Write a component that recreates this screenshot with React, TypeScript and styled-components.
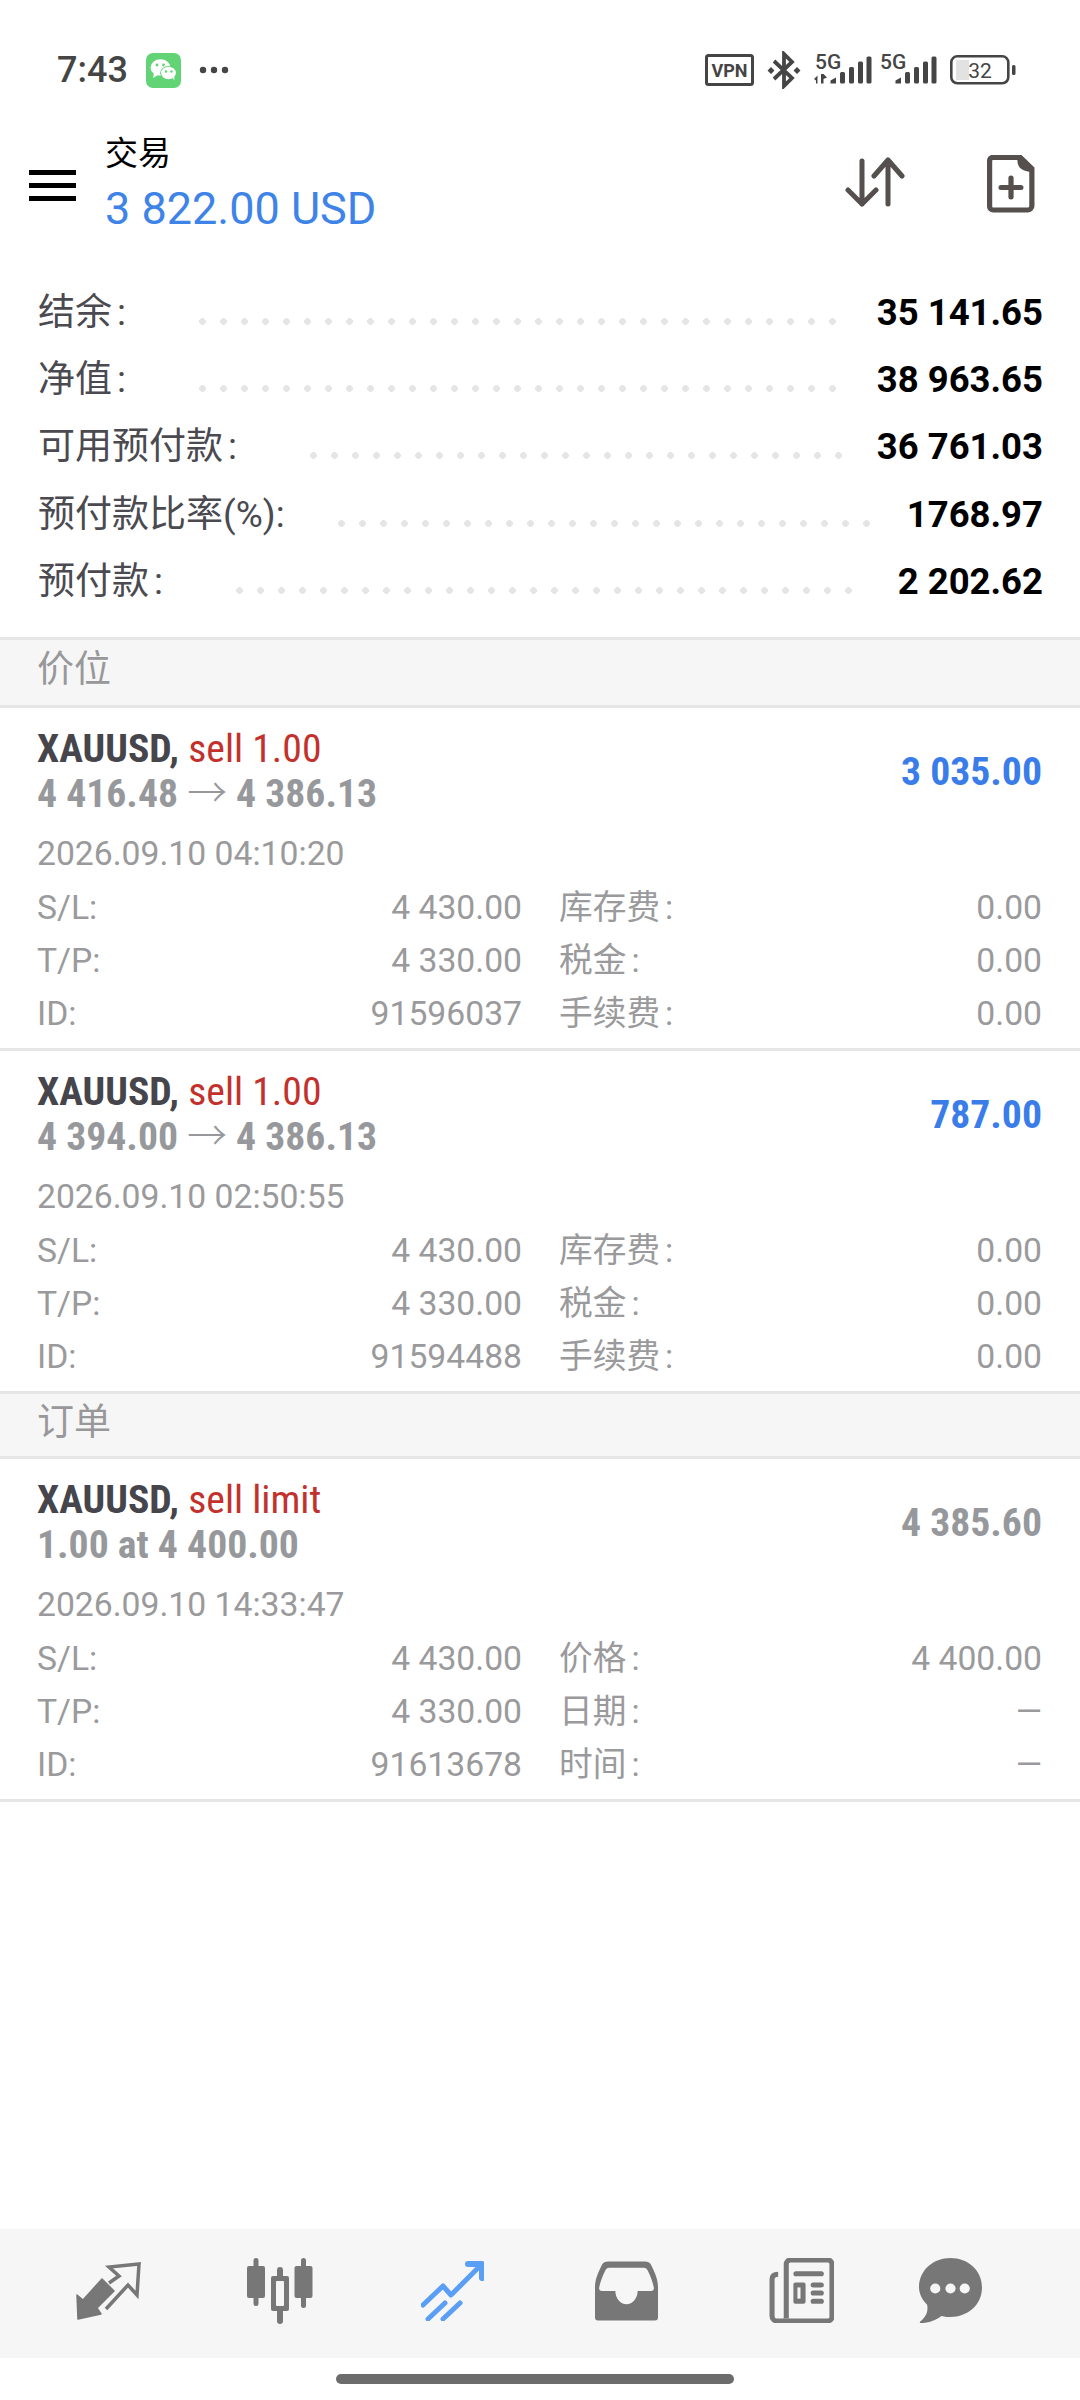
import React from "react";
import styled, { createGlobalStyle } from "styled-components";

const Global = createGlobalStyle`
  html, body { margin: 0; padding: 0; background: #fff; }
  body { font-family: Roboto, "Noto Sans CJK SC", sans-serif; }
`;

const Page = styled.div`
  width: 1080px;
  height: 2400px;
  display: flex;
  flex-direction: column;
  background: #fff;
  overflow: hidden;
`;

const StatusBar = styled.div`
  height: 140px;
  flex: none;
  display: flex;
  align-items: flex-start;
  padding: 51px 64px 0 57px;
  box-sizing: border-box;
`;
const Time = styled.span`
  font-size: 36px;
  line-height: 38px;
  font-weight: 500;
  color: #454545;
`;
const StatusLeft = styled.div`
  display: flex;
  align-items: center;
  gap: 18px;
`;
const StatusRight = styled.div`
  margin-left: auto;
  display: flex;
  align-items: center;
  gap: 13px;
`;
const SignalPair = styled.div`
  display: flex;
  align-items: center;
  gap: 7px;
`;

const Header = styled.div`
  height: 115px;
  flex: none;
  display: flex;
  align-items: flex-start;
  padding: 0 45px 0 29px;
  box-sizing: border-box;
`;
const Burger = styled.div`
  width: 47px;
  margin-top: 30px;
  display: flex;
  flex-direction: column;
  gap: 8px;
`;
const BurgerBar = styled.span`
  height: 5px;
  background: #000;
`;
const TitleBlock = styled.div`
  margin-left: 29px;
  display: flex;
  flex-direction: column;
`;
const PageTitle = styled.div`
  font-size: 33px;
  line-height: 40px;
  color: #000;
  font-weight: 400;
  margin-top: -6px;
`;
const Balance = styled.div`
  font-size: 45px;
  line-height: 52px;
  color: #3e84e8;
  margin-top: 9px;
`;
const HeaderIcons = styled.div`
  margin-left: auto;
  margin-top: 15px;
  display: flex;
  align-items: flex-start;
  gap: 82px;
`;
const SortSlot = styled.div`
  display: flex;
  margin-top: 2px;
`;

const Summary = styled.div`
  flex: none;
  height: 385px;
  padding: 24px 37px 0 38px;
  box-sizing: border-box;
  border-bottom: 3px solid #e6e6e6;
`;
const SummaryRow = styled.div`
  height: 67.2px;
  display: flex;
  align-items: center;
`;
const SummaryLabel = styled.span`
  font-size: 37px;
  line-height: 44px;
  margin-top: 1px;
  color: #4a4a50;
  font-weight: 400;
`;
const Colon = styled.span<{ $tight?: boolean }>`
  margin-left: ${(p) => (p.$tight ? 0 : 5)}px;
`;
const Leader = styled.span<{ $gap: number }>`
  flex: 1;
  height: 7px;
  margin: 18px 32px 0 ${(p) => p.$gap}px;
  background-image: radial-gradient(circle at 3.5px 3.5px, #e5e5e5 3.1px, transparent 3.6px);
  background-size: 21px 7px;
  background-repeat: repeat-x;
`;
const SummaryValue = styled.span`
  font-size: 36.5px;
  font-weight: 700;
  color: #000;
`;

const SectionBar = styled.div<{ $height: number; $pad: number }>`
  flex: none;
  height: ${(p) => p.$height}px;
  padding: 0 0 ${(p) => p.$pad}px 37px;
  box-sizing: border-box;
  display: flex;
  align-items: center;
  background: #f6f6f6;
  border-bottom: 3px solid #e6e6e6;
  font-size: 37px;
  font-weight: 400;
  color: #98989a;
`;

const Card = styled.div`
  flex: none;
  height: 343px;
  box-sizing: border-box;
  padding: 18px 38px 0 37px;
  border-bottom: 3px solid #e6e6e6;
`;
const CardTop = styled.div`
  display: flex;
  align-items: center;
  height: 90px;
`;
const CardTitles = styled.div`
  flex: 1;
  display: flex;
  flex-direction: column;
`;
const Condensed = styled.span`
  display: block;
  font-size: 39.7px;
  line-height: 45px;
  font-weight: 700;
  font-stretch: 75%;
  white-space: nowrap;
`;
const Symbol = styled(Condensed)`
  color: #45454b;
`;
const Side = styled.span`
  color: #c2312c;
  font-weight: 400;
`;
const Prices = styled(Condensed)`
  color: #96989c;
`;
const Arrow = styled.span`
  font-weight: 300;
`;
const Profit = styled(Condensed)<{ $color: string }>`
  color: ${(p) => p.$color};
`;
const DateLine = styled.div`
  font-size: 33.7px;
  line-height: 53px;
  margin-top: 11px;
  color: #9a9a9c;
`;
const Details = styled.div`
  display: grid;
  grid-template-columns: 485px 483px;
  column-gap: 37px;
  margin-top: 1px;
`;
const DetailRow = styled.div`
  display: flex;
  justify-content: space-between;
  font-size: 33.7px;
  line-height: 53px;
  height: 53px;
  font-weight: 400;
  color: #9a9a9c;
`;

const Spacer = styled.div`
  flex: 1;
`;
const Nav = styled.div`
  flex: none;
  height: 129px;
  background: #f6f6f6;
  display: flex;
  align-items: center;
  padding: 0 98px 6px 76px;
  box-sizing: border-box;
`;
const NavGroup = styled.div`
  display: grid;
  grid-template-columns: 171px 174px 174px 174px 65px;
  align-items: center;
`;
const NavEnd = styled.div`
  margin-left: auto;
  display: flex;
`;
const BottomArea = styled.div`
  flex: none;
  height: 42px;
  display: flex;
  justify-content: center;
  padding: 16px 10px 0 0;
  box-sizing: border-box;
`;
const HomeBar = styled.div`
  width: 398px;
  height: 10px;
  border-radius: 5px;
  background: #6c6c6c;
`;

const WeChat = () => (
  <svg width="35" height="35" viewBox="0 0 35 35">
    <rect width="35" height="35" rx="7" fill="#62d475" />
    <ellipse cx="14.500" cy="14.500" rx="10" ry="8.200" fill="#fff" />
    <path d="M8 20l-1 5 5-3z" fill="#fff" />
    <ellipse cx="22.500" cy="20" rx="8.400" ry="7" fill="#62d475" />
    <ellipse cx="22.500" cy="20" rx="7.400" ry="6.200" fill="#fff" />
    <path d="M26 24l2.500 3.500-.5-5z" fill="#fff" />
    <circle cx="11" cy="12" r="1.400" fill="#62d475" />
    <circle cx="17.500" cy="12" r="1.400" fill="#62d475" />
    <circle cx="20" cy="18.500" r="1.200" fill="#62d475" />
    <circle cx="25.500" cy="18.500" r="1.200" fill="#62d475" />
  </svg>
);
const More = () => (
  <svg width="30" height="8" viewBox="0 0 30 8">
    <circle cx="4" cy="4" r="3.200" fill="#454545" />
    <circle cx="15" cy="4" r="3.200" fill="#454545" />
    <circle cx="26" cy="4" r="3.200" fill="#454545" />
  </svg>
);
const Vpn = () => (
  <svg width="49" height="32" viewBox="0 0 49 32">
    <rect x="1.500" y="1.500" width="46" height="29" rx="2" fill="none" stroke="#454545" strokeWidth="3" />
    <text x="24.500" y="22.500" textAnchor="middle" fontFamily="Roboto" fontWeight="700" fontSize="18" fill="#454545">VPN</text>
  </svg>
);
const Bluetooth = () => (
  <svg width="34" height="38" viewBox="0 0 34 38">
    <path d="M7 10l18 17-8 8V3l8 8L7 28" fill="none" stroke="#454545" strokeWidth="3.800" />
    <path d="M4 16l3.500 3.500L4 23 .5 19.500zM30 16l3.500 3.500L30 23l-3.500-3.500z" fill="#454545" />
  </svg>
);
const Signal = ({ arrows }: { arrows?: boolean }) => (
  <svg width="58" height="34" viewBox="0 0 58 34" overflow="visible">
    <text x="1" y="16" fontFamily="Roboto" fontWeight="500" fontSize="21" fill="#454545">5G</text>
    {arrows && (
      <path d="M0 26l3.500-3.500v8H2v-3zM7 21h2.500v9.500H7zM9.500 21l3.500 3.500-3.500 1.500z" fill="#454545" />
    )}
    <path d="M16.500 30.500v-3l5.500-3v6z" fill="#454545" />
    <rect x="26" y="19" width="5" height="11.500" rx="1.500" fill="#454545" />
    <rect x="35" y="14" width="5" height="16.500" rx="1.500" fill="#454545" />
    <rect x="44" y="8.500" width="5" height="22" rx="1.500" fill="#454545" />
    <rect x="52.500" y="3.500" width="5" height="27" rx="1.500" fill="#454545" />
  </svg>
);
const Battery = () => (
  <svg width="66" height="30" viewBox="0 0 66 30">
    <rect x="1.300" y="1.300" width="57" height="27" rx="6" fill="none" stroke="#454545" strokeWidth="2.600" />
    <path d="M6 5h13v20H6z" fill="#e2e2e2" />
    <rect x="62" y="10" width="3.500" height="10" rx="1.500" fill="#454545" />
    <text x="30" y="23" textAnchor="middle" fontFamily="Roboto" fontSize="21" fill="#454545">32</text>
  </svg>
);
const SortIcon = () => (
  <svg width="60" height="50" viewBox="0 0 60 50" fill="none" stroke="#55504e" strokeWidth="5" strokeLinecap="round" strokeLinejoin="round">
    <path d="M17 4v43M3 33l14 14 14-14" />
    <path d="M43 47V3M29 19L43 3l14 16" />
  </svg>
);
const NewFile = () => (
  <svg width="48" height="58" viewBox="0 0 46 58" fill="none" preserveAspectRatio="none">
    <path d="M5 2.500h27l11 11V51a4 4 0 0 1-4 4H6a3.500 3.500 0 0 1-3.500-3.500V6A3.500 3.500 0 0 1 5 2.500z" stroke="#55504e" strokeWidth="5" />
    <path d="M29 3c0 8 2 13 14 14V11L34 2z" fill="#55504e" />
    <path d="M23 23v19M13.500 32.500h19" stroke="#55504e" strokeWidth="5" strokeLinecap="round" />
  </svg>
);

const NavTrade = () => (
  <svg width="65" height="58" viewBox="0 0 65 58">
    <path d="M26 17L38 29 21 46l4 6-23 5-1-24 6 5z" fill="#777" stroke="#777" strokeWidth="1.500" strokeLinejoin="round" />
    <path d="M33 21l10-7-10-9 30-3-2 31-9-10-22 24" fill="none" stroke="#777" strokeWidth="3.500" />
  </svg>
);
const NavChart = () => (
  <svg width="66" height="66" viewBox="0 0 66 66" fill="#777">
    <rect x="6.500" y="0" width="5" height="48" rx="2.500" />
    <rect x="0" y="8" width="18" height="32" rx="2" />
    <rect x="30" y="9" width="6" height="57" rx="3" />
    <rect x="24" y="18" width="18" height="35" rx="2" />
    <rect x="29" y="23" width="8" height="25" rx="1" fill="#f6f6f6" />
    <rect x="54" y="0" width="5" height="50" rx="2.500" />
    <rect x="47.500" y="8" width="18" height="32" rx="2" />
  </svg>
);
const NavPositions = () => (
  <svg width="63" height="60" viewBox="0 0 63 60" fill="none" stroke="#5a9ef5" strokeWidth="5" strokeLinecap="round" strokeLinejoin="round">
    <path d="M2 44l20-19 8 9L60 4" />
    <path d="M47 3h14v14" strokeWidth="6" />
    <path d="M7 58l17-16M22 58l17-16" />
  </svg>
);
const NavInbox = () => (
  <svg width="63" height="60" viewBox="0 0 62 58" fill="#777">
    <path fillRule="evenodd" d="M13 0h36c3 0 5 1 6 3 4 8 7 15 7 22v30c0 2-1 3-3 3H3c-2 0-3-1-3-3V25C0 18 3 11 7 3c1-2 3-3 6-3zM14 6c-2 0-3 1-4 3-3 6-5 12-6 17 0 2 1 3 3 3h13c0 7 5 13 11 13s11-6 11-13h13c2 0 3-1 3-3-1-5-3-11-6-17-1-2-2-3-4-3z" />
  </svg>
);
const NavNews = () => (
  <svg width="65" height="65" viewBox="0 0 64 64" fill="none">
    <path d="M14 62h44a4 4 0 0 0 4-4V6a4 4 0 0 0-4-4H21a4 4 0 0 0-4 4v53" stroke="#777" strokeWidth="5" />
    <path d="M9 16c-4 0-6 2-6 5v36c0 3 2 5 5 5h12" stroke="#777" strokeWidth="5" />
    <rect x="24" y="13" width="30" height="5" rx="2.500" fill="#777" />
    <rect x="24" y="24" width="12" height="21" rx="2" fill="#777" />
    <rect x="28" y="29" width="3" height="11" fill="#f6f6f6" />
    <rect x="41" y="24" width="13" height="5" rx="2.500" fill="#777" />
    <rect x="41" y="32" width="13" height="5" rx="2.500" fill="#777" />
    <rect x="41" y="40" width="13" height="5" rx="2.500" fill="#777" />
  </svg>
);
const NavChat = () => (
  <svg width="63" height="65" viewBox="0 0 62 64">
    <path d="M31 0c17 0 31 12 31 29S48 58 31 58c-3 0-5 0-9-1-5 4-12 7-21 7-1-1 1-2 2-3 5-5 6-10 5-15C3 41 0 35 0 29 0 12 14 0 31 0z" fill="#777" />
    <circle cx="16" cy="30" r="5" fill="#f6f6f6" />
    <circle cx="31" cy="30" r="5" fill="#f6f6f6" />
    <circle cx="45" cy="30" r="5" fill="#f6f6f6" />
  </svg>
);

const summary = [
  { label: "结余", value: "35 141.65", gap: 73, tight: false },
  { label: "净值", value: "38 963.65", gap: 73, tight: false },
  { label: "可用预付款", value: "36 761.03", gap: 73, tight: false },
  { label: "预付款比率(%)", value: "1768.97", gap: 53, tight: true },
  { label: "预付款", value: "2 202.62", gap: 73, tight: false },
];

type Trade = {
  side: string;
  line2: React.ReactNode;
  result: string;
  resultColor: string;
  date: string;
  id: string;
  right: [string, string][];
};
const positionRight: [string, string][] = [
  ["库存费", "0.00"],
  ["税金", "0.00"],
  ["手续费", "0.00"],
];
const positions: Trade[] = [
  {
    side: "sell 1.00",
    line2: <>4 416.48 <Arrow>→</Arrow> 4 386.13</>,
    result: "3 035.00",
    resultColor: "#3a7de8",
    date: "2026.09.10 04:10:20",
    id: "91596037",
    right: positionRight,
  },
  {
    side: "sell 1.00",
    line2: <>4 394.00 <Arrow>→</Arrow> 4 386.13</>,
    result: "787.00",
    resultColor: "#3a7de8",
    date: "2026.09.10 02:50:55",
    id: "91594488",
    right: positionRight,
  },
];
const order: Trade = {
  side: "sell limit",
  line2: "1.00 at 4 400.00",
  result: "4 385.60",
  resultColor: "#96989c",
  date: "2026.09.10 14:33:47",
  id: "91613678",
  right: [
    ["价格", "4 400.00"],
    ["日期", "—"],
    ["时间", "—"],
  ],
};

const TradeCard = ({ t }: { t: Trade }) => {
  const left: [string, string][] = [
    ["S/L:", "4 430.00"],
    ["T/P:", "4 330.00"],
    ["ID:", t.id],
  ];
  return (
    <Card>
      <CardTop>
        <CardTitles>
          <Symbol>XAUUSD, <Side>{t.side}</Side></Symbol>
          <Prices>{t.line2}</Prices>
        </CardTitles>
        <Profit $color={t.resultColor}>{t.result}</Profit>
      </CardTop>
      <DateLine>{t.date}</DateLine>
      <Details>
        {left.map((row, i) => (
          <React.Fragment key={row[0]}>
            <DetailRow><span>{row[0]}</span><span>{row[1]}</span></DetailRow>
            <DetailRow><span>{t.right[i][0]}<Colon>:</Colon></span><span>{t.right[i][1]}</span></DetailRow>
          </React.Fragment>
        ))}
      </Details>
    </Card>
  );
};

export default function App() {
  return (
    <Page>
      <Global />
      <StatusBar>
        <StatusLeft>
          <Time>7:43</Time>
          <WeChat />
          <More />
        </StatusLeft>
        <StatusRight>
          <Vpn />
          <Bluetooth />
          <SignalPair>
            <Signal arrows />
            <Signal />
          </SignalPair>
          <Battery />
        </StatusRight>
      </StatusBar>
      <Header>
        <Burger><BurgerBar /><BurgerBar /><BurgerBar /></Burger>
        <TitleBlock>
          <PageTitle>交易</PageTitle>
          <Balance>3 822.00 USD</Balance>
        </TitleBlock>
        <HeaderIcons>
          <SortSlot><SortIcon /></SortSlot>
          <NewFile />
        </HeaderIcons>
      </Header>
      <Summary>
        {summary.map((s) => (
          <SummaryRow key={s.label}>
            <SummaryLabel>{s.label}<Colon $tight={s.tight}>:</Colon></SummaryLabel>
            <Leader $gap={s.gap} />
            <SummaryValue>{s.value}</SummaryValue>
          </SummaryRow>
        ))}
      </Summary>
      <SectionBar $height={68} $pad={13}>价位</SectionBar>
      {positions.map((p) => <TradeCard key={p.id} t={p} />)}
      <SectionBar $height={65} $pad={13}>订单</SectionBar>
      <TradeCard t={order} />
      <Spacer />
      <Nav>
        <NavGroup>
          <NavTrade />
          <NavChart />
          <NavPositions />
          <NavInbox />
          <NavNews />
        </NavGroup>
        <NavEnd><NavChat /></NavEnd>
      </Nav>
      <BottomArea><HomeBar /></BottomArea>
    </Page>
  );
}
